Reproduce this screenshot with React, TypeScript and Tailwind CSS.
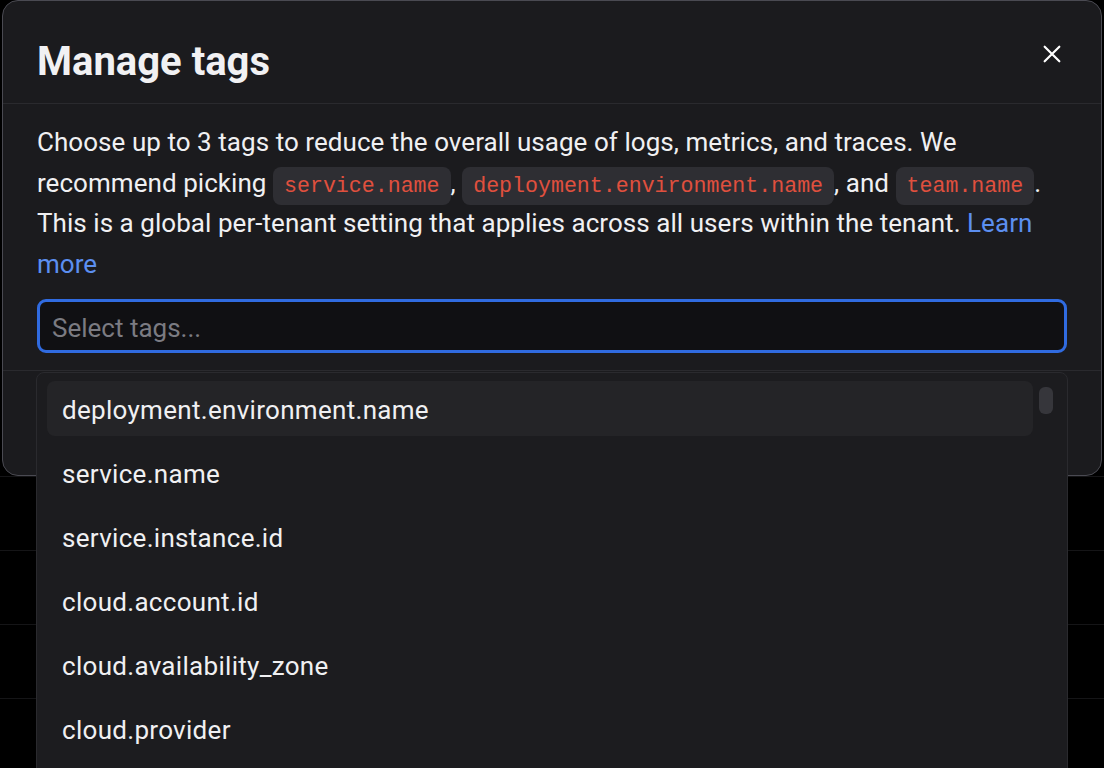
import React from 'react';

const tagOptions = [
    'deployment.environment.name',
    'service.name',
    'service.instance.id',
    'cloud.account.id',
    'cloud.availability_zone',
    'cloud.provider',
];

const Code = ({ children }: { children: React.ReactNode }) => (
    <code className="rounded-lg bg-[#2e2e33] px-[11px] py-[7px] text-[21.6px] leading-none tracking-normal text-[#e0503e] font-['Liberation_Mono',monospace]">
        {children}
    </code>
);

function App() {
    return (
        <div className="relative h-[768px] w-[1104px] overflow-hidden bg-black font-['Roboto',sans-serif]">
            {/* tabla de fondo */}
            <div className="pt-[476px]">
                {[0, 1, 2, 3].map(i => (
                    <div key={i} className="h-[74px] border-t border-[#151517]" />
                ))}
            </div>

            {/* dialogo */}
            <div className="absolute left-[2px] top-0 w-[1100px] h-[476px] rounded-2xl border border-[#4a4a52] bg-[#1b1b1e] flex flex-col">
                <div className="flex h-[103px] items-center justify-between border-b border-[#2a2a2e] pl-[34px] pr-[38px]">
                    <h1 className="mt-[20px] text-[40px] font-bold text-[#f1f1f3]">Manage tags</h1>
                    <button className="mt-[4px] text-white">
                        <svg width="22" height="22" viewBox="0 0 24 24" fill="none" stroke="currentColor" strokeWidth="2.4" strokeLinecap="round">
                            <path d="M4 4L20 20M20 4L4 20" />
                        </svg>
                    </button>
                </div>
                <div className="px-[34px] pt-[18px] pb-[17px] border-b border-[#2a2a2e]">
                    <p className="text-[26px] leading-[40.7px] tracking-[0.05px] text-[#f0f0f2]">
                        Choose up to 3 tags to reduce the overall usage of logs, metrics, and traces. We recommend picking{' '}
                        <Code>service.name</Code>, <Code>deployment.environment.name</Code>, and <Code>team.name</Code>. This is a global
                        per-tenant setting that applies across all users within the tenant.{' '}
                        <a className="text-[#5c8ff0]">Learn more</a>
                    </p>
                    <div className="mt-[14px] flex h-[54px] items-center rounded-[9px] border-[3px] border-[#306be0] bg-[#101013] px-[12px] pt-[5px]">
                        <span className="text-[26px] text-[#7b7b82]">Select tags...</span>
                    </div>
                </div>
            </div>

            {/* lista desplegable */}
            <div className="absolute left-[36px] top-[372px] w-[1032px] h-[420px] overflow-hidden rounded-t-lg border border-[#2a2a2e] bg-[#1c1c1f] flex pl-[10px] pr-[14px] pt-[8px] gap-[6px]">
                <ul className="flex-1 flex flex-col gap-[9px]">
                    {tagOptions.map((tag, i) => (
                        <li
                            key={tag}
                            className={`h-[55px] shrink-0 flex items-center rounded-lg px-[15px] pt-[4px] text-[26px] tracking-[0.3px] text-[#f0f0f2] ${i === 0 ? 'bg-[#242427]' : ''}`}
                        >
                            {tag}
                        </li>
                    ))}
                </ul>
                <div className="w-[14px] pt-[6px]">
                    <div className="h-[27px] rounded-md bg-[#36363b]" />
                </div>
            </div>
        </div>
    );
}

export default App;
